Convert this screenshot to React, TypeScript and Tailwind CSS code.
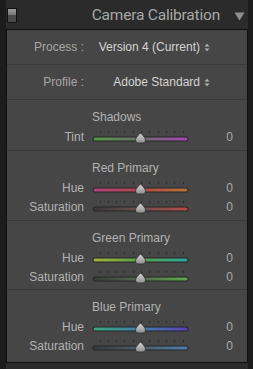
import * as React from "react"

type Slider = { label: string; from: string; mid: string; to: string }

const sections: { title: string; h: string; rows: Slider[] }[] = [
  { title: "Shadows", h: "h-[51px]", rows: [{ label: "Tint", from: "#4f9e45", mid: "#6d6d6d", to: "#a548b0" }] },
  {
    title: "Red Primary",
    h: "h-[70px]",
    rows: [
      { label: "Hue", from: "#b2417f", mid: "#b24848", to: "#b4743a" },
      { label: "Saturation", from: "#3a3a3a", mid: "#6b4f4f", to: "#b84a4a" },
    ],
  },
  {
    title: "Green Primary",
    h: "h-[69px]",
    rows: [
      { label: "Hue", from: "#a6b238", mid: "#55a548", to: "#2fa6a2" },
      { label: "Saturation", from: "#3a3a3a", mid: "#536a4e", to: "#5ea84a" },
    ],
  },
  {
    title: "Blue Primary",
    h: "h-[69px]",
    rows: [
      { label: "Hue", from: "#37a67c", mid: "#3f7fae", to: "#5a3fb8" },
      { label: "Saturation", from: "#3a3a3a", mid: "#4d5d6a", to: "#4b7fa8" },
    ],
  },
]

function Track({ s, id }: { s: Slider; id: string }) {
  const ticks = Array.from({ length: 11 }, (_, i) => 7.5 + i * 8.3)
  return (
    <svg width="97" height="14" viewBox="0 0 97 14" className="block">
      <defs>
        <linearGradient id={id} x1="0" x2="1" y1="0" y2="0">
          <stop offset="0" stopColor={s.from} />
          <stop offset="0.5" stopColor={s.mid} />
          <stop offset="1" stopColor={s.to} />
        </linearGradient>
        <linearGradient id={id + "t"} x1="0" x2="0" y1="0" y2="1">
          <stop offset="0" stopColor="#d6d6d6" />
          <stop offset="1" stopColor="#8e8e8e" />
        </linearGradient>
      </defs>
      {ticks.map((x, i) => (
        <rect key={i} x={Math.round(x)} y="1" width="1" height="2" fill="#2c2c2c" />
      ))}
      <rect x="0.5" y="6.5" width="96" height="5" rx="2.5" fill="#262626" />
      <rect x="1.5" y="7.5" width="94" height="3" rx="1.5" fill={`url(#${id})`} />
      <path d="M48.5 3 C50 5 53.5 7 53.5 10 C53.5 12 52 13 50 13 L47 13 C45 13 43.5 12 43.5 10 C43.5 7 47 5 48.5 3 Z" fill={`url(#${id}t)`} stroke="#303030" strokeWidth="0.8" />
    </svg>
  )
}

function SliderRow({ s, id }: { s: Slider; id: string }) {
  return (
    <div className="flex items-center h-[19px]">
      <div className="w-[77px] text-right text-[12px] text-[#b2b2b2]">{s.label}</div>
      <div className="ml-[8px] mt-[1px]">
        <Track s={s} id={id} />
      </div>
      <div className="flex-1 text-right pr-[14px] text-[12px] text-[#a9a9a9]">0</div>
    </div>
  )
}

function Updown() {
  return (
    <svg width="6" height="9" viewBox="0 0 6 9" className="ml-[4px]">
      <path d="M0.5 3.5 L3 0.8 L5.5 3.5 Z" fill="#b5b5b5" />
      <path d="M0.5 5.5 L3 8.2 L5.5 5.5 Z" fill="#b5b5b5" />
    </svg>
  )
}

export default function App() {
  return (
    <div
      className="w-[253px] h-[369px] bg-[#1c1c1c] pl-[6px] pr-[5px] overflow-hidden"
      style={{ fontFamily: '"Liberation Sans", Arial, sans-serif' }}
    >
      <div className="h-full bg-[#2b2b2b]">
        <div className="h-[29px] flex items-center pl-[1px] pr-[2px]">
          <div className="w-[10px] h-[15px] border border-[#111] flex flex-col mt-[1px]">
            <div className="flex-1 bg-gradient-to-b from-[#9a9a9a] to-[#777]" />
            <div className="flex-1 bg-[#4a4a4a]" />
          </div>
          <div className="flex-1 text-right text-[15.5px] text-[#a7a7a7] pr-[14px] pt-[3px] tracking-[-0.2px]" style={{ fontFamily: "Roboto, sans-serif" }}>
            Camera Calibration
          </div>
          <svg width="11" height="9" viewBox="0 0 11 9" className="mr-[1px] mt-[3px]">
            <path d="M0.5 0.5 L10.5 0.5 L5.5 8.5 Z" fill="#8f8f8f" />
          </svg>
        </div>
        <div className="border border-[#111] bg-[#464646] h-[334px]">
          <div className="h-[35px] flex items-center border-b border-[#393939]">
            <div className="w-[77px] text-right text-[12px] text-[#a8a8a8]">Process :</div>
            <div className="w-[126px] flex justify-end items-center text-[12px] text-[#d4d4d4]">
              Version 4 (Current)
              <Updown />
            </div>
          </div>
          <div className="h-[35px] flex items-center border-b border-[#393939]">
            <div className="w-[77px] text-right text-[12px] text-[#a8a8a8]">Profile :</div>
            <div className="w-[126px] flex justify-end items-center text-[12px] text-[#d4d4d4]">
              Adobe Standard
              <Updown />
            </div>
          </div>
          {sections.map((sec, i) => (
            <div key={sec.title} className={`${sec.h} pt-[6px] ${i < sections.length - 1 ? "border-b border-[#393939]" : ""}`}>
              <div className="h-[21px] flex items-center text-[12px] text-[#b2b2b2] pl-[85px]">{sec.title}</div>
              {sec.rows.map((r, j) => (
                <SliderRow key={j} s={r} id={`g${i}${j}`} />
              ))}
            </div>
          ))}
        </div>
      </div>
    </div>
  )
}
